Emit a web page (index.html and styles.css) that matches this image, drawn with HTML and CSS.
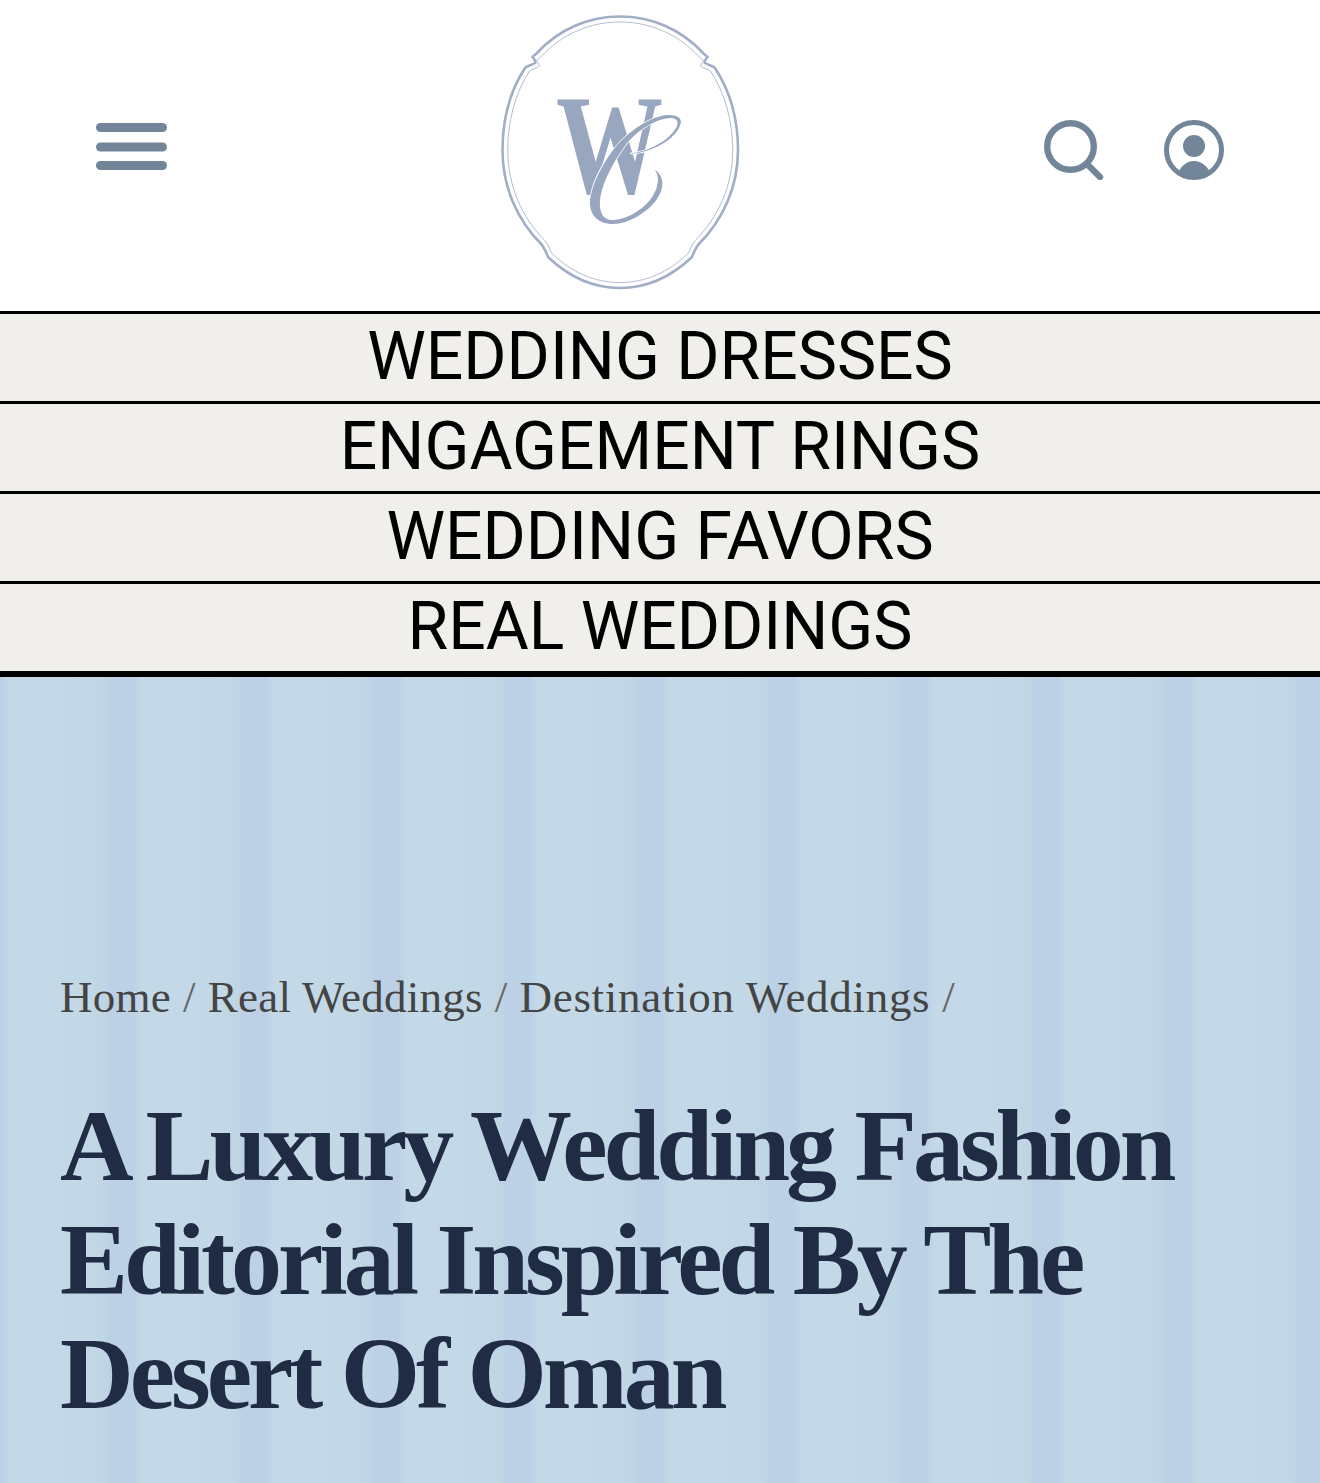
FILE: index.html
```html
<!DOCTYPE html>
<html lang="en">
<head>
    <meta charset="UTF-8">
    <meta name="viewport" content="width=device-width, initial-scale=1.0">
    <title>A Luxury Wedding Fashion Editorial Inspired By The Desert Of Oman</title>
    <link rel="stylesheet" href="styles.css">
</head>
<body>
    <!-- Header -->
    <header class="header">
        <svg class="menu-icon" width="71" height="47" viewBox="0 0 71 47">
            <rect x="0" y="0" width="71" height="9" rx="4.5"/>
            <rect x="0" y="19.5" width="71" height="9" rx="4.5"/>
            <rect x="0" y="38" width="71" height="9" rx="4.5"/>
        </svg>

        <svg class="logo" width="240" height="276" viewBox="0 0 240 276">
            <path class="logo-outer" d="M119 1.5 C150 1.5 180 14 202 38 C204 40 206 41 206.500 42 C204 45 203 47 204 48 C207 50 212 51 214 53 C229 76 237 105 237 135 C237 172 222 205 197 230 C195 233 193 236 191 242 C170 262 146 273 119 273 C92 273 68 262 47 242 C45 236 43 233 41 230 C16 205 1.500 172 1.500 135 C1.500 105 9 76 24 53 C26 51 31 50 34 48 C35 47 34 45 31.500 42 C32 41 34 40 36 38 C58 14 88 1.500 119 1.500 Z"/>
            <path class="logo-inner" transform="translate(119 137.500) scale(.955 .96) translate(-119 -137.500)" d="M119 1.5 C150 1.5 180 14 202 38 C204 40 206 41 206.500 42 C204 45 203 47 204 48 C207 50 212 51 214 53 C229 76 237 105 237 135 C237 172 222 205 197 230 C195 233 193 236 191 242 C170 262 146 273 119 273 C92 273 68 262 47 242 C45 236 43 233 41 230 C16 205 1.500 172 1.500 135 C1.500 105 9 76 24 53 C26 51 31 50 34 48 C35 47 34 45 31.500 42 C32 41 34 40 36 38 C58 14 88 1.500 119 1.500 Z"/>
            <text class="logo-w" x="55" y="178" textLength="107" lengthAdjust="spacingAndGlyphs">W</text>
            <path class="logo-c" d="M129 138.500 C145 139 170 128 178 113 C183 104 178 100 167 100 C150 101 128 115 112 135 C100 151 91 170 89 185 C88 199 96 209 112 209 C128 209 147 197 156 184 C163 174 164 162 154 155 C160 164 156 176 149 185 C139 197 124 205 111 205 C102 205 98 197 99 186 C100 171 110 150 126 128 C138 114 155 104 169 103 C177 103 178 108 175 113 C168 125 150 136 129 138.500 Z"/>
        </svg>

        <div class="tools">
            <svg width="60" height="60" viewBox="0 0 60 60">
                <circle class="line" cx="26.5" cy="26.5" r="23.3"/>
                <path class="line round" d="M44 45 L56 57"/>
            </svg>
            <svg width="60" height="60" viewBox="0 0 60 60">
                <circle class="line thin" cx="30" cy="30" r="27.5"/>
                <circle class="solid" cx="30" cy="26" r="11"/>
                <path class="solid" d="M14.5 52 C18 45 23 41 30 41 C37 41 42 45 46 52 C38 59 23 59 14.5 52 Z"/>
            </svg>
        </div>
    </header>

    <!-- Category links -->
    <nav class="categories">
        <a href="#">WEDDING DRESSES</a>
        <a href="#">ENGAGEMENT RINGS</a>
        <a href="#">WEDDING FAVORS</a>
        <a href="#">REAL WEDDINGS</a>
    </nav>

    <!-- Article title -->
    <section class="hero">
        <div class="crumbs">
            <a href="#">Home</a><span>/</span>
            <a href="#">Real Weddings</a><span>/</span>
            <a class="last" href="#">Destination Weddings</a><span>/</span>
        </div>
        <h1>A Luxury Wedding Fashion Editorial Inspired By The Desert Of Oman</h1>
    </section>
</body>
</html>
```

FILE: styles.css
```css
body {
    margin: 0;
    height: 1483px;
    overflow: hidden;
    background: #fff;
}
.header {
    display: flex;
    align-items: flex-start;
    height: 296px;
    padding: 15px 96px 0;
}
.menu-icon {
    margin: 108px 334px 0 0;
    fill: #728599;
}
.logo {
    flex: none;
}
.logo-outer {
    fill: none;
    stroke: #a2aec6;
    stroke-width: 2.6;
}
.logo-inner {
    fill: none;
    stroke: #aeb9ce;
    stroke-width: 1;
}
.logo-w {
    font-family: "Liberation Serif", serif;
    font-size: 141px;
    font-weight: bold;
    fill: #98a6c0;
}
.logo-c {
    fill: #98a6c0;
    stroke: #fff;
    stroke-width: 1.5;
    paint-order: stroke;
}
.tools {
    display: flex;
    gap: 60px;
    margin: 105px 0 0 auto;
}
.line {
    fill: none;
    stroke: #728599;
    stroke-width: 6.4;
}
.thin {
    stroke-width: 5;
}
.round {
    stroke-linecap: round;
}
.solid {
    fill: #728599;
}
.categories {
    display: flex;
    flex-direction: column;
    border-bottom: 6px solid #000;
}
.categories a {
    height: 87px;
    border-top: 3px solid #000;
    background: #f0efec;
    color: #000;
    font-family: Roboto, sans-serif;
    font-size: 66px;
    line-height: 86px;
    text-align: center;
    text-decoration: none;
}
.hero {
    height: 806px;
    box-sizing: border-box;
    padding: 288px 60px 0;
    background-color: #c3d9e7;
    background-image: linear-gradient(90deg,
        #bcd1e6 0,
        #bcd1e6 25px,
        #c3d9e7 33px,
        #c3d9e7 60px,
        #c2d8e6 112px,
        #c0d5e3 129px,
        #bcd1e6 132px);
    background-size: 132px 100%;
    background-position: 109px 0;
}
.crumbs {
    display: flex;
    gap: 12px;
    font-family: "Liberation Serif", serif;
    font-size: 45px;
    line-height: 64px;
    letter-spacing: .25px;
    color: #444;
}
.crumbs a {
    color: #444;
    text-decoration: none;
}
.crumbs .last {
    letter-spacing: .7px;
}
.crumbs span {
    color: #666;
}
h1 {
    margin: 60px 0 0;
    font-family: "Liberation Serif", serif;
    font-size: 102px;
    font-weight: bold;
    line-height: 114px;
    letter-spacing: -4px;
    color: #202c44;
}
```
